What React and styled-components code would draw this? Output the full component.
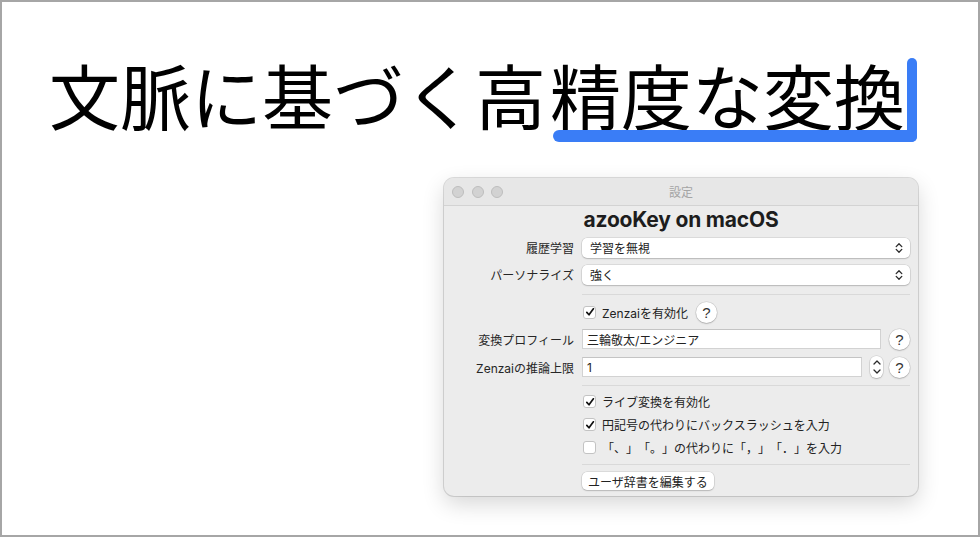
import React from "react";
import styled, { createGlobalStyle } from "styled-components";

const GlobalStyle = createGlobalStyle`
    html, body {
        margin: 0;
        padding: 0;
        background: #ffffff;
    }
`

const uiFont = `"Inter", "Noto Sans CJK JP", sans-serif`
const accent = '#3a7df6'

const Frame = styled.div`
    width: 980px;
    height: 537px;
    box-sizing: border-box;
    border: 2px solid #a6a6a6;
    background: #ffffff;
    padding: 56px 0 0 47px;
    overflow: hidden;
    display: flex;
    flex-direction: column;
`

const Headline = styled.div`
    display: flex;
    align-items: flex-start;
    font-family: "Noto Sans CJK JP", sans-serif;
    font-size: 71px;
    line-height: 71px;
    color: #000;
    white-space: nowrap;
`

const Marked = styled.span`
    position: relative;
    display: inline-flex;
    align-items: flex-start;
    margin-left: 4px;

    &::after {
        content: '';
        position: absolute;
        left: 3px;
        right: 0;
        bottom: 0;
        height: 12px;
        border-radius: 6px;
        background: ${accent};
    }
`

const Caret = styled.span`
    width: 10px;
    height: 84px;
    margin-left: 2px;
    border-radius: 5px;
    background: ${accent};
`

const Window = styled.div`
    width: 474px;
    margin: 36px 60px 0 auto;
    border-radius: 10px;
    background: #ececec;
    overflow: hidden;
    box-shadow: 0 0 0 1px rgba(0, 0, 0, 0.13), 0 8px 22px rgba(0, 0, 0, 0.16);
    font-family: ${uiFont};
    font-size: 12px;
    color: #222;
    text-spacing-trim: space-all;
`

const TitleBar = styled.div`
    height: 28px;
    box-sizing: border-box;
    display: grid;
    grid-template-columns: 1fr auto 1fr;
    align-items: center;
    padding: 0 8px;
    background: #e7e7e7;
    border-bottom: 1px solid #d3d3d3;
`

const Lights = styled.div`
    display: flex;
    gap: 7.5px;
`

const Light = styled.span`
    width: 12px;
    height: 12px;
    box-sizing: border-box;
    border-radius: 50%;
    background: #d2d2d2;
    border: 1px solid #bdbdbd;
`

const Title = styled.div`
    font-family: "Noto Sans CJK JP", sans-serif;
    font-size: 12px;
    color: #a4a4a4;
`

const Heading = styled.h1`
    margin: 0;
    height: 28px;
    line-height: 28px;
    text-align: center;
    font-family: "Inter", sans-serif;
    font-size: 21px;
    font-weight: 700;
    letter-spacing: -0.2px;
    color: #1d1d1d;
`

const Form = styled.div`
    padding: 0 8px 3px 0;
`

const Row = styled.div`
    display: grid;
    grid-template-columns: 130px 1fr;
    column-gap: 8px;
    align-items: center;
    height: ${props => props.h}px;
`

const Label = styled.div`
    text-align: right;
    white-space: nowrap;
    color: #262626;
`

const Controls = styled.div`
    display: flex;
    align-items: center;
    gap: ${props => props.gap || 8}px;
    min-width: 0;
`

const Popup = styled.div`
    flex: 1;
    height: 20px;
    display: flex;
    align-items: center;
    justify-content: space-between;
    padding: 0 7px 0 8px;
    background: #fff;
    border-radius: 5px;
    box-shadow: 0 0 0 0.5px rgba(0, 0, 0, 0.14), 0 1px 1.5px rgba(0, 0, 0, 0.16);
`

const Field = styled.div`
    flex: 1;
    height: 20px;
    box-sizing: border-box;
    display: flex;
    align-items: center;
    padding: 0 4px;
    background: #fff;
    border: 1px solid #d2d2d2;
    border-top-color: #c4c4c4;
`

const Line = styled.div`
    height: 1px;
    background: #d9d9d9;
`

const Check = styled.span`
    width: 13px;
    height: 13px;
    box-sizing: border-box;
    border-radius: 3px;
    background: #fff;
    border: 1px solid #c3c3c3;
    display: flex;
    align-items: center;
    justify-content: center;
    flex-shrink: 0;
    margin-left: 1px;
`

const CheckText = styled.span`
    white-space: nowrap;
    color: #222;
`

const Help = styled.span`
    width: 21px;
    height: 21px;
    border-radius: 50%;
    background: #fff;
    box-shadow: 0 0 0 0.5px rgba(0, 0, 0, 0.14), 0 1px 1.5px rgba(0, 0, 0, 0.18);
    display: flex;
    align-items: center;
    justify-content: center;
    font-family: "Liberation Sans", sans-serif;
    font-size: 15px;
    color: #333;
    flex-shrink: 0;
    margin-left: ${props => props.offset || 0}px;
`

const Stepper = styled.span`
    width: 13px;
    height: 22px;
    border-radius: 6px;
    background: #fff;
    box-shadow: 0 0 0 0.5px rgba(0, 0, 0, 0.14), 0 1px 1.5px rgba(0, 0, 0, 0.18);
    display: flex;
    flex-direction: column;
    align-items: center;
    justify-content: space-around;
    padding: 2px 0;
    box-sizing: border-box;
    flex-shrink: 0;
    margin-left: 2px;
`

const Button = styled.div`
    height: 18px;
    display: flex;
    align-items: center;
    padding: 0 6px;
    background: #fff;
    border-radius: 5px;
    box-shadow: 0 0 0 0.5px rgba(0, 0, 0, 0.14), 0 1px 1.5px rgba(0, 0, 0, 0.16);
    white-space: nowrap;
`

const Chevrons = () => (
    <svg width="8" height="12" viewBox="0 0 8 12">
        <path d="M1.2 4.6 L4 1.8 L6.8 4.6 M1.2 7.4 L4 10.2 L6.8 7.4" fill="none" stroke="#2a2a2a" strokeWidth="1.3" strokeLinecap="round" strokeLinejoin="round" />
    </svg>
)

const Tick = () => (
    <svg width="10" height="10" viewBox="0 0 10 10">
        <path d="M1.8 5.4 L4 7.8 L8.4 1.8" fill="none" stroke="#111" strokeWidth="1.7" strokeLinecap="round" strokeLinejoin="round" />
    </svg>
)

const Arrow = ({ up }) => (
    <svg width="8" height="5" viewBox="0 0 8 5">
        <path d={up ? "M1 4 L4 1 L7 4" : "M1 1 L4 4 L7 1"} fill="none" stroke="#2a2a2a" strokeWidth="1.3" strokeLinecap="round" strokeLinejoin="round" />
    </svg>
)

const Separator = ({ h }) => (
    <Row h={h}>
        <span />
        <Line />
    </Row>
)

const CheckRow = ({ checked, label, help, h = 23 }) => (
    <Row h={h}>
        <span />
        <Controls gap={6}>
            <Check>{checked && <Tick />}</Check>
            <CheckText>{label}</CheckText>
            {help && <Help offset={2}>?</Help>}
        </Controls>
    </Row>
)

const App = () => (
    <>
        <GlobalStyle />
        <Frame>
            <Headline>
                <span>文脈に基づく高</span>
                <Marked>
                    <span>精度な変換</span>
                    <Caret />
                </Marked>
            </Headline>

            <Window>
                <TitleBar>
                    <Lights>
                        <Light />
                        <Light />
                        <Light />
                    </Lights>
                    <Title>設定</Title>
                    <span />
                </TitleBar>
                <Heading>azooKey on macOS</Heading>
                <Form>
                    <Row h={27}>
                        <Label>履歴学習</Label>
                        <Popup>学習を無視<Chevrons /></Popup>
                    </Row>
                    <Row h={27}>
                        <Label>パーソナライズ</Label>
                        <Popup>強く<Chevrons /></Popup>
                    </Row>
                    <Separator h={12} />
                    <CheckRow h={24} checked help label="Zenzaiを有効化" />
                    <Row h={30}>
                        <Label>変換プロフィール</Label>
                        <Controls>
                            <Field>三輪敬太/エンジニア</Field>
                            <Help>?</Help>
                        </Controls>
                    </Row>
                    <Row h={26}>
                        <Label>Zenzaiの推論上限</Label>
                        <Controls gap={6}>
                            <Field>1</Field>
                            <Stepper><Arrow up /><Arrow /></Stepper>
                            <Help>?</Help>
                        </Controls>
                    </Row>
                    <Separator h={10} />
                    <CheckRow checked label="ライブ変換を有効化" />
                    <CheckRow checked label="円記号の代わりにバックスラッシュを入力" />
                    <CheckRow label="「、」「。」の代わりに「，」「．」を入力" />
                    <Separator h={10} />
                    <Row h={24}>
                        <span />
                        <Controls>
                            <Button>ユーザ辞書を編集する</Button>
                        </Controls>
                    </Row>
                </Form>
            </Window>
        </Frame>
    </>
)

export default App;
